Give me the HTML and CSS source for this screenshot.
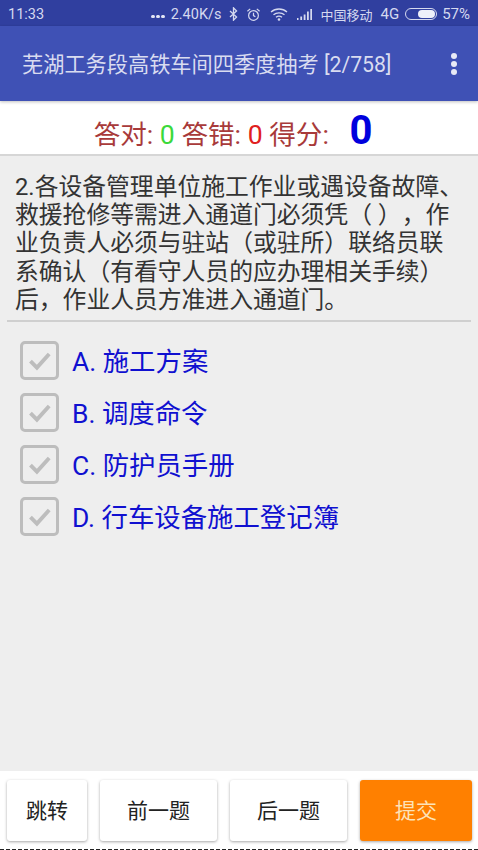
FILE: index.html
```html
<!DOCTYPE html>
<html lang="zh-CN">
<head>
<meta charset="utf-8">
<title>芜湖工务段高铁车间四季度抽考</title>
<link rel="stylesheet" href="styles.css">
</head>
<body>
<div class="screen">
  <div class="statusbar">
    <span class="time">11:33</span>
    <div class="status-right">
      <span class="dots"><i></i><i></i><i></i></span>
      <span class="speed">2.40K/s</span>
      <svg class="ic-bt" viewBox="0 0 10 16"><path d="M1 4.500l7.500 7L5 15V1l3.500 3.500L1 11.500" fill="none" stroke="#d5d9ef" stroke-width="1.500"/></svg>
      <svg class="ic-alarm" viewBox="0 0 16 16"><circle cx="8" cy="9" r="5.200" fill="none" stroke="#d5d9ef" stroke-width="1.300"/><path d="M8 6v3.200l2 1.300M1.500 4.500L4.500 2M14.500 4.500L11.500 2" fill="none" stroke="#d5d9ef" stroke-width="1.300"/></svg>
      <svg class="ic-wifi" viewBox="0 0 18 14"><path d="M1 5c4.500-4 11.500-4 16 0M3.500 7.800c3-2.700 8-2.700 11 0M6 10.300c1.700-1.400 4.300-1.400 6 0" fill="none" stroke="#d5d9ef" stroke-width="1.300"/><circle cx="9" cy="12.500" r="1.300" fill="#d5d9ef"/></svg>
      <svg class="ic-signal" viewBox="0 0 17 12"><path d="M1 10h1.500v2H1zM4.300 8.500h1.800V12H4.300zM7.700 6.500h1.800V12H7.700zM11 3.500h1.800V12H11zM14.300 1H16v11h-1.700z" fill="#d5d9ef"/></svg>
      <span class="carrier">中国移动</span>
      <span class="net">4G</span>
      <span class="battery"><span class="battery-fill"></span></span>
      <span class="pct">57%</span>
    </div>
  </div>
  <header class="appbar">
    <h1 class="title">芜湖工务段高铁车间四季度抽考 [2/758]</h1>
    <span class="menu"><i></i><i></i><i></i></span>
  </header>
  <div class="score"><span>答对: </span><span class="ok">0</span><span> 答错: </span><span class="bad">0</span><span> 得分: </span><b class="total">0</b></div>
  <main class="content">
    <p class="question">2.各设备管理单位施工作业或遇设备故障、救援抢修等需进入通道门必须凭（ ），作业负责人必须与驻站（或驻所）联络员联系确认（有看守人员的应办理相关手续）后，作业人员方准进入通道门。</p>
    <ul class="options">
      <li class="option"><span class="check"><svg viewBox="0 0 24 24"><path d="M5 12.500l5 5L19.500 7" fill="none" stroke="#bdbdbd" stroke-width="3"/></svg></span>A. 施工方案</li>
      <li class="option"><span class="check"><svg viewBox="0 0 24 24"><path d="M5 12.500l5 5L19.500 7" fill="none" stroke="#bdbdbd" stroke-width="3"/></svg></span>B. 调度命令</li>
      <li class="option"><span class="check"><svg viewBox="0 0 24 24"><path d="M5 12.500l5 5L19.500 7" fill="none" stroke="#bdbdbd" stroke-width="3"/></svg></span>C. 防护员手册</li>
      <li class="option"><span class="check"><svg viewBox="0 0 24 24"><path d="M5 12.500l5 5L19.500 7" fill="none" stroke="#bdbdbd" stroke-width="3"/></svg></span>D. 行车设备施工登记簿</li>
    </ul>
  </main>
  <footer class="footer">
    <button class="btn btn-jump">跳转</button>
    <button class="btn btn-nav">前一题</button>
    <button class="btn btn-nav">后一题</button>
    <button class="btn btn-submit">提交</button>
  </footer>
  <div class="dashes"></div>
</div>
</body>
</html>
```
FILE: styles.css
```css
* { box-sizing: border-box; }
html, body { margin: 0; padding: 0; }
body {
  font-family: "Roboto", "Noto Sans CJK SC", sans-serif;
  background: #eeeeee;
}
.screen {
  width: 478px;
  height: 850px;
  display: flex;
  flex-direction: column;
  overflow: hidden;
}
.statusbar {
  height: 26px;
  flex: none;
  background: #303f9f;
  color: #d5d9ef;
  display: flex;
  align-items: center;
  justify-content: space-between;
  padding: 2px 8px 0 8px;
  font-size: 14.500px;
}
.status-right { display: flex; align-items: center; }
.dots { display: flex; gap: 1.500px; margin-right: 6px; padding-top: 5px; }
.dots i { width: 3.500px; height: 3.500px; border-radius: 50%; background: #e3e6f5; }
.speed { margin-right: 8px; font-size: 14.500px; }
.ic-bt { width: 9px; height: 14px; margin-right: 8px; }
.ic-alarm { width: 15px; height: 15px; margin-right: 9px; }
.ic-wifi { width: 18px; height: 14px; margin-right: 8px; }
.ic-signal { width: 17px; height: 12px; margin-right: 7px; }
.carrier { font-size: 13px; margin-right: 8px; }
.net { font-size: 15px; margin-right: 6px; }
.battery {
  width: 32px;
  height: 12px;
  border: 1px solid #d5d9ef;
  border-radius: 6px;
  margin-right: 5px;
  display: flex;
  justify-content: flex-end;
  padding: 1px;
}
.battery-fill { width: 17px; background: #eef0fa; border-radius: 5px; }
.pct { font-size: 15px; }
.appbar {
  height: 75px;
  flex: none;
  background: #3f51b5;
  color: #d9dcf0;
  display: flex;
  align-items: center;
  justify-content: space-between;
  padding: 0 21px 0 22px;
  box-shadow: 0 1px 3px rgba(0,0,0,.25);
  position: relative;
  z-index: 1;
}
.title { margin: 0; font-size: 21.200px; font-weight: 400; line-height: 28px; padding-top: 2px; }
.menu { display: flex; flex-direction: column; gap: 2px; }
.menu i { width: 6px; height: 6px; border-radius: 50%; background: #e8eaf6; }
.score {
  height: 55px;
  flex: none;
  background: #fff;
  border-bottom: 2px solid #d6d6d6;
  color: #a83a3a;
  font-size: 26.600px;
  text-align: center;
  padding: 10px 12px 0 0;
  line-height: 46px;
}
.ok { color: #3bd93b; }
.bad { color: #e02020; }
.total { color: #0000dd; font-size: 40px; margin-left: 14px; font-weight: 700; line-height: 40px; }
.content { flex: 1; min-height: 0; padding: 0 7px; background: #eeeeee; }
.question {
  margin: 0;
  padding: 17px 8px 6px 8px;
  font-size: 23.800px;
  line-height: 28.200px;
  color: #333;
  border-bottom: 2px solid #cfcfcf;
  height: 166px;
  text-spacing-trim: space-all;
}
.options { list-style: none; margin: 0; padding: 11px 0 0 13px; }
.option {
  height: 52px;
  display: flex;
  align-items: center;
  color: #1010d0;
  font-size: 26.400px;
}
.check {
  width: 39px;
  height: 39px;
  border: 3px solid #bdbdbd;
  border-radius: 5px;
  margin-top: 2px;
  margin-right: 13px;
  display: flex;
  align-items: center;
  justify-content: center;
}
.check svg { width: 31px; height: 31px; flex: none; }
.footer {
  height: 78px;
  flex: none;
  background: #fff;
  display: flex;
  gap: 13px;
  padding: 9px 6px 8px 7px;
}
.btn {
  border: 0;
  border-radius: 3px;
  background: #fff;
  font-family: inherit;
  font-size: 21px;
  color: #222;
  padding: 0 0 4px;
  box-shadow: 0 1px 3px rgba(0,0,0,.35);
}
.btn-jump { width: 80px; }
.btn-nav { width: 117px; }
.btn-submit { width: 112px; background: #ff8000; color: #fde3b8; }
.dashes {
  height: 1px;
  flex: none;
  background: repeating-linear-gradient(90deg, #222 0 4px, #fff 4px 6px);
}
```
